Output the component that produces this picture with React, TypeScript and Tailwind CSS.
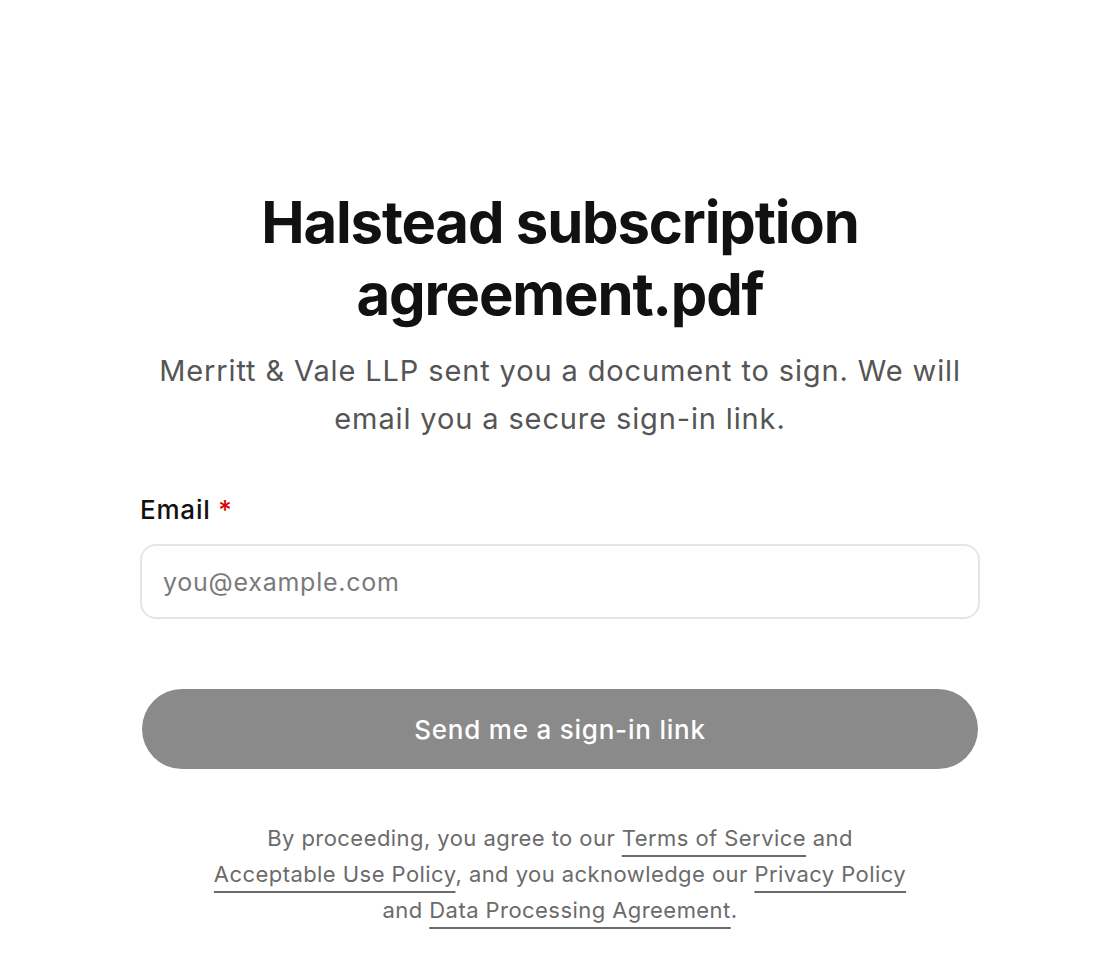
import React, { useState } from "react";

const FONT = { fontFamily: "Inter, 'Liberation Sans', sans-serif" };

export default function App() {
  const [email, setEmail] = useState("");

  return (
    <div className="min-h-screen w-full bg-white" style={FONT}>
      <div className="mx-auto flex w-[840px] flex-col pt-[186px]">
        {/* Header */}
        <h1 className="text-center text-[58px] font-bold leading-[72px] tracking-[-0.02em] text-[#111111]">
          Halstead subscription
          <br />
          agreement.pdf
        </h1>
        <p className="mt-[17px] text-center text-[29px] leading-[48px] tracking-[0.03em] text-[#555555]">
          Merritt &amp; Vale LLP sent you a document to sign. We will
          <br />
          email you a secure sign-in link.
        </p>

        {/* Form */}
        <label htmlFor="email" className="mt-[51px] text-[26px] font-medium leading-[32px] tracking-[0.03em] text-[#111111]">
          Email <span className="text-[#e00000]">*</span>
        </label>
        <input
          id="email"
          type="email"
          value={email}
          onChange={(e) => setEmail(e.target.value)}
          placeholder="you@example.com"
          className="mt-[18px] h-[75px] w-full rounded-[16px] border-2 border-[#e6e6e6] bg-white px-[21px] text-[25px] tracking-[0.03em] text-[#111111] outline-none placeholder:text-[#7a7a7a]"
        />

        <button
          type="button"
          disabled={!email}
          className="mx-[2px] mt-[70px] h-[80px] rounded-full bg-[#8a8a8a] text-[26px] font-medium tracking-[0.03em] text-white"
        >
          Send me a sign-in link
        </button>

        {/* Legal */}
        <p className="mt-[51px] text-center text-[22px] leading-[36px] tracking-[0.02em] text-[#6b6b6b]">
          By proceeding, you agree to our{" "}
          <a href="#" className="underline decoration-[#6b6b6b] decoration-2 underline-offset-[9px]">Terms of Service</a> and
          <br />
          <a href="#" className="underline decoration-[#6b6b6b] decoration-2 underline-offset-[9px]">Acceptable Use Policy</a>, and you acknowledge our{" "}
          <a href="#" className="underline decoration-[#6b6b6b] decoration-2 underline-offset-[9px]">Privacy Policy</a>
          <br />
          and{" "}
          <a href="#" className="underline decoration-[#6b6b6b] decoration-2 underline-offset-[9px]">Data Processing Agreement</a>.
        </p>
      </div>
    </div>
  );
}
